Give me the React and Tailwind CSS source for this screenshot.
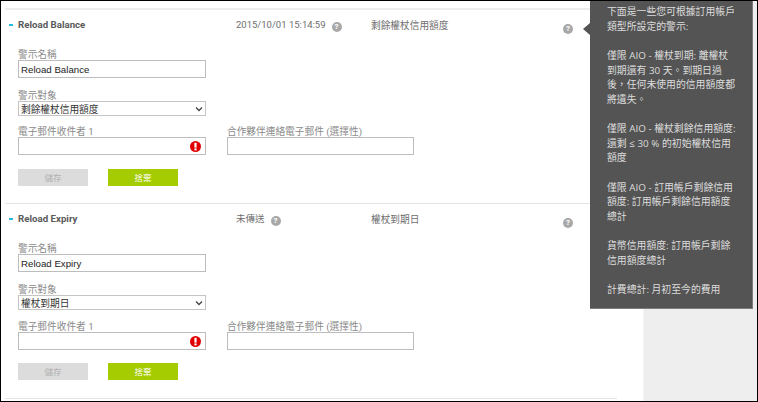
import React from "react";

function Help({ className = "" }) {
  return (
    <span className={`flex h-[10px] w-[10px] shrink-0 items-center justify-center rounded-full bg-[#a8a8a8] text-[8px] font-bold leading-none text-white ${className}`}>?</span>
  );
}

function Field({ label, children, className = "" }) {
  return (
    <div className={className}>
      <div className="h-[12px] text-[9.7px] leading-[14px] text-[#8a8a8a]">{label}</div>
      {children}
    </div>
  );
}

function Section({ title, status, target, name, first }) {
  return (
    <section className={`h-[195px] ${first ? "border-t-2 border-[#eeeeee]" : "border-t border-[#e4e4e4]"}`}>
      <div className="mt-[8px] flex h-[14px] w-[568px] items-center text-[9.5px]">
        <span className="ml-[4px] h-[2px] w-[4px] bg-[#22b8e0]" />
        <span className="ml-[5px] w-[218px] text-[9.7px] font-bold text-[#5a5a5a]">{title}</span>
        <div className="flex w-[135px] items-center">
          <span className="text-[#6e6e6e]">{status}</span>
          <Help className="ml-[6px] mt-[3px]" />
        </div>
        <span className="mt-[2px] text-[9.7px] text-[#6e6e6e]">{target}</span>
        <Help className="ml-auto mt-[8px]" />
      </div>
      <div className="ml-[13px] mt-[16px] w-[397px]">
        <Field label="警示名稱">
          <input readOnly value={name} className="block h-[18px] w-[188px] border border-[#bdbdbd] bg-white px-[2px] font-['Liberation_Sans',sans-serif] text-[9.7px] leading-none text-[#222]" />
        </Field>
        <Field label="警示對象" className="mt-[11px]">
          <div className="flex h-[15px] w-[188px] items-center justify-between border border-[#c4c4c4] bg-white pl-[2px] pr-[2px] text-[9.7px] leading-none text-[#333]">
            <span className="mt-[2px]">{target}</span>
            <svg width="8" height="6" viewBox="0 0 8 6"><path d="M1 1.5 L4 4.5 L7 1.5" fill="none" stroke="#444" strokeWidth="1.3" /></svg>
          </div>
        </Field>
        <div className={`flex gap-[21px] ${first ? "mt-[9px]" : "mt-[10px]"}`}>
          <Field label="電子郵件收件者 1">
            <div className="relative h-[18px] w-[188px] border border-[#bdbdbd] bg-white">
              <svg className="absolute right-[4px] top-[3px]" width="11" height="11" viewBox="0 0 11 11">
                <circle cx="5.5" cy="5.5" r="5.5" fill="#e00000" />
                <rect x="4.4" y="1.8" width="2.2" height="4.8" fill="#fff" />
                <rect x="4.4" y="7.4" width="2.2" height="2" fill="#fff" />
              </svg>
            </div>
          </Field>
          <Field label="合作夥伴連絡電子郵件 (選擇性)">
            <div className="h-[18px] w-[187px] border border-[#bdbdbd] bg-white" />
          </Field>
        </div>
        <div className={`flex gap-[20px] ${first ? "mt-[14px]" : "mt-[13px]"}`}>
          <div className="flex h-[17px] w-[70px] items-center justify-center bg-[#dcdcdc] pt-[2px] text-[8.5px] text-[#b0b0b0]">儲存</div>
          <div className="flex h-[17px] w-[70px] items-center justify-center bg-[#a5cc00] pt-[2px] text-[8.5px] text-white">捨棄</div>
        </div>
      </div>
    </section>
  );
}

export default function App() {
  return (
    <div className="relative h-[402px] w-[758px] overflow-hidden border border-black bg-white font-['Roboto','Noto_Sans_CJK_TC','Liberation_Sans',sans-serif]">
      <div className="flex h-full">
        <div className="w-[642px] pl-[4px] pt-[7px]">
          <Section first title="Reload Balance" status="2015/10/01 15:14:59" target="剩餘權杖信用額度" name="Reload Balance" />
          <Section title="Reload Expiry" status="未傳送" target="權杖到期日" name="Reload Expiry" />
          <div className="h-px w-[612px] bg-[#e4e4e4]" />
        </div>
        <div className="flex-1 border-l border-[#f4f4f4] bg-[#eeeeee]" />
      </div>
      <div className="absolute left-[589px] top-0 h-[308px] w-[163px] border-r border-b border-[#7c7c7c] bg-[#545454] pl-[17px] pr-[16px] pt-[3px] font-['Open_Sans','Noto_Sans_CJK_TC',sans-serif] text-[9.85px] leading-[14.63px] text-[#dddddd]">
        <p>下面是一些您可根據訂用帳戶類型所設定的警示:</p>
        <p className="mt-[14.63px]">僅限 AIO - 權杖到期: 離權杖到期還有 30 天。到期日過後，任何未使用的信用額度都將遺失。</p>
        <p className="mt-[14.63px]">僅限 AIO - 權杖剩餘信用額度: 還剩 ≤ 30 % 的初始權杖信用額度</p>
        <p className="mt-[14.63px]">僅限 AIO - 訂用帳戶剩餘信用額度: 訂用帳戶剩餘信用額度總計</p>
        <p className="mt-[14.63px]">貨幣信用額度: 訂用帳戶剩餘信用額度總計</p>
        <p className="mt-[14.63px]">計費總計: 月初至今的費用</p>
      </div>
      <div className="absolute left-[582px] top-[22px] h-0 w-0 border-y-[6px] border-r-[7px] border-y-transparent border-r-[#545454]" />
    </div>
  );
}
